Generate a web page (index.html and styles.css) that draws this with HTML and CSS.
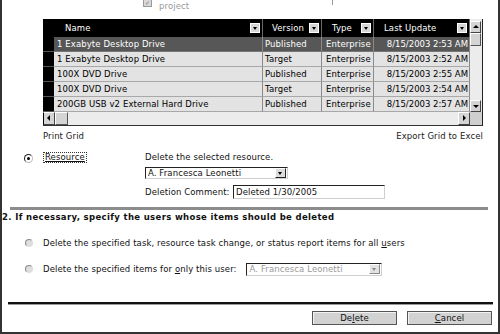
FILE: index.html
```html
<!doctype html>
<html lang="en">
<head>
    <meta charset="UTF-8">
    <title>Delete Resource</title>
    <link rel="stylesheet" href="styles.css">
</head>
<body>
<div class="frame">
    <div class="top-note">
        <span class="check">&#10003;</span>
        <span class="note-text">project</span>
        <span class="tick"></span>
    </div>

    <div class="grid">
        <div class="grid-main">
            <div class="grid-table">
                <div class="hd sel"></div>
                <div class="hd pad-name"><span>Name</span><span class="drop"></span></div>
                <div class="hd pad-ver"><span>Version</span><span class="drop"></span></div>
                <div class="hd pad-type"><span>Type</span><span class="drop"></span></div>
                <div class="hd pad-last"><span>Last Update</span><span class="drop"></span></div>

                <div class="cell sel"></div>
                <div class="cell current name">1 Exabyte Desktop Drive</div>
                <div class="cell current ver">Published</div>
                <div class="cell current type">Enterprise</div>
                <div class="cell current date">8/15/2003 2:53 AM</div>

                <div class="cell sel"></div>
                <div class="cell name">1 Exabyte Desktop Drive</div>
                <div class="cell ver">Target</div>
                <div class="cell type">Enterprise</div>
                <div class="cell date">8/15/2003 2:52 AM</div>

                <div class="cell sel"></div>
                <div class="cell name">100X DVD Drive</div>
                <div class="cell ver">Published</div>
                <div class="cell type">Enterprise</div>
                <div class="cell date">8/15/2003 2:55 AM</div>

                <div class="cell sel"></div>
                <div class="cell name">100X DVD Drive</div>
                <div class="cell ver">Target</div>
                <div class="cell type">Enterprise</div>
                <div class="cell date">8/15/2003 2:54 AM</div>

                <div class="cell sel"></div>
                <div class="cell name">200GB USB v2 External Hard Drive</div>
                <div class="cell ver">Published</div>
                <div class="cell type">Enterprise</div>
                <div class="cell date">8/15/2003 2:57 AM</div>
            </div>
            <div class="vscroll">
                <span class="sbtn up"></span>
                <span class="thumb"></span>
                <span class="track"></span>
                <span class="sbtn down"></span>
            </div>
        </div>
        <div class="hscroll">
            <span class="sbtn left"></span>
            <span class="thumb"></span>
            <span class="track"></span>
            <span class="sbtn right"></span>
            <span class="corner"></span>
        </div>
    </div>

    <div class="grid-links">
        <span>Print Grid</span>
        <span>Export Grid to Excel</span>
    </div>

    <div class="resource-row">
        <span class="radio checked"></span>
        <div class="label-col"><span class="focus-label">Resource</span></div>
        <div class="fields">
            <div class="line">Delete the selected resource.</div>
            <div class="select wide">
                <span class="select-text">A. Francesca Leonetti</span>
                <span class="select-btn"></span>
            </div>
            <div class="comment">
                <span class="comment-label">Deletion Comment:</span>
                <span class="input">Deleted 1/30/2005</span>
            </div>
        </div>
    </div>

    <div class="divider"></div>

    <div class="section-title">2. If necessary, specify the users whose items should be deleted</div>

    <div class="option first">
        <span class="radio"></span>
        <span class="option-text">Delete the specified task, resource task change, or status report items for all <u>u</u>sers</span>
    </div>
    <div class="option">
        <span class="radio"></span>
        <span class="option-text">Delete the specified items for <u>o</u>nly this user:</span>
        <div class="select narrow disabled">
            <span class="select-text">A. Francesca Leonetti</span>
            <span class="select-btn"></span>
        </div>
    </div>

    <div class="bottom-line"></div>

    <div class="buttons">
        <button type="button">De<u>l</u>ete</button>
        <button type="button"><u>C</u>ancel</button>
    </div>
</div>
</body>
</html>
```

FILE: styles.css
```css
body {
    margin: 0;
    padding: 0;
    background: #ffffff;
    font-family: 'DejaVu Sans', Verdana, sans-serif;
    font-size: 8.5px;
    letter-spacing: 0.1px;
    color: #111111;
}
.frame {
    width: 500px;
    height: 334px;
    box-sizing: border-box;
    border-left: 2px solid #333333;
    border-right: 2px solid #333333;
    border-bottom: 2px solid #333333;
    overflow: hidden;
}
.top-note {
    height: 19px;
    display: flex;
    align-items: flex-start;
    padding-left: 141px;
}
.check {
    width: 7px;
    height: 6px;
    background: #d8d8d8;
    border: 1px solid #9a9a9a;
    border-top: none;
    font-size: 6px;
    line-height: 5px;
    color: #777777;
    text-align: center;
    overflow: hidden;
}
.note-text {
    margin-left: 7px;
    line-height: 12px;
    color: #9a9a9a;
}
.tick {
    width: 1px;
    height: 5px;
    background: #999999;
    margin-left: 143px;
}

/* grid */
.grid {
    margin-left: 41px;
    width: 440px;
    border-bottom: 1px solid #333333;
    border-right: 1px solid #222222;
    box-sizing: border-box;
}
.grid-main {
    display: flex;
}
.grid-table {
    display: grid;
    grid-template-columns: 11px 209px 59px 52px 96px;
    grid-template-rows: 18px repeat(5, 15px);
}
.hd {
    background: #000000;
    color: #ffffff;
    display: flex;
    align-items: center;
    justify-content: space-between;
    border-right: 1px solid #6a6a6a;
    padding-right: 2px;
    white-space: nowrap;
}
.hd.sel {
    border-right: none;
}
.pad-name { padding-left: 11px; }
.pad-ver { padding-left: 9px; }
.pad-type { padding-left: 10px; }
.pad-last { padding-left: 10px; }
.drop {
    width: 10px;
    height: 10px;
    background: #d6d6d6;
    border: 1px solid #ffffff;
    box-sizing: border-box;
    position: relative;
}
.drop::after {
    content: "";
    position: absolute;
    left: 2px;
    top: 3px;
    border-left: 2.5px solid transparent;
    border-right: 2.5px solid transparent;
    border-top: 3px solid #000000;
}
.cell {
    background: #e3e3e3;
    color: #000000;
    border-right: 1px solid #8a8a8a;
    border-bottom: 1px solid #a8a8a8;
    line-height: 14px;
    white-space: nowrap;
    overflow: hidden;
    padding-left: 3px;
}
.cell.sel {
    background: #000000;
    border-right: none;
    border-bottom: 1px solid #555555;
    padding: 0;
}
.cell.current {
    background: #575757;
    color: #ffffff;
    border-bottom-color: #777777;
}
.cell.ver { padding-left: 2px; }
.cell.type { padding-left: 4px; }
.cell.date {
    text-align: right;
    padding-left: 0;
    padding-right: 1px;
    letter-spacing: 0;
}
.vscroll {
    width: 12px;
    display: flex;
    flex-direction: column;
    background: #ececec;
    padding-top: 2px;
    box-sizing: border-box;
}
.sbtn {
    width: 11px;
    height: 12px;
    background: #d4d4d4;
    border: 1px solid #ffffff;
    border-right-color: #444444;
    border-bottom-color: #444444;
    box-sizing: border-box;
    position: relative;
    flex-shrink: 0;
}
.sbtn::after {
    content: "";
    position: absolute;
    left: 2px;
    top: 3px;
}
.sbtn.up::after {
    border-left: 3px solid transparent;
    border-right: 3px solid transparent;
    border-bottom: 3px solid #000000;
}
.sbtn.down::after {
    top: 4px;
    border-left: 3px solid transparent;
    border-right: 3px solid transparent;
    border-top: 3px solid #000000;
}
.sbtn.left::after {
    left: 3px;
    top: 2px;
    border-top: 3px solid transparent;
    border-bottom: 3px solid transparent;
    border-right: 3px solid #000000;
}
.sbtn.right::after {
    left: 4px;
    top: 2px;
    border-top: 3px solid transparent;
    border-bottom: 3px solid transparent;
    border-left: 3px solid #000000;
}
.vscroll .thumb {
    height: 13px;
    width: 11px;
    background: #d4d4d4;
    border: 1px solid #ffffff;
    border-right-color: #555555;
    border-bottom-color: #555555;
    box-sizing: border-box;
}
.vscroll .track {
    flex: 1;
}
.hscroll {
    height: 13px;
    display: flex;
    background: #ececec;
    align-items: stretch;
}
.hscroll .sbtn {
    width: 12px;
    height: 13px;
}
.hscroll .sbtn.left {
    border-left: 1px solid #000000;
}
.hscroll .thumb {
    width: 13px;
    background: #d4d4d4;
    border: 1px solid #ffffff;
    border-right-color: #555555;
    border-bottom-color: #555555;
    box-sizing: border-box;
}
.hscroll .track {
    flex: 1;
}
.hscroll .corner {
    width: 12px;
    background: #cfcfcf;
}

.grid-links {
    margin: 4px 0 0 41px;
    width: 440px;
    display: flex;
    justify-content: space-between;
    line-height: 12px;
    color: #222222;
}

/* resource */
.resource-row {
    display: flex;
    margin-top: 9px;
    align-items: flex-start;
}
.radio {
    width: 9px;
    height: 9px;
    border-radius: 50%;
    box-sizing: border-box;
    border: 1px solid #7a7a7a;
    border-bottom-color: #dcdcdc;
    border-right-color: #dcdcdc;
    background: #e8e8e8;
    margin-left: 22px;
    flex-shrink: 0;
    position: relative;
}
.radio.checked {
    margin-top: 3px;
    border-color: #222222;
    border-bottom-color: #bbbbbb;
    border-right-color: #bbbbbb;
    background: #ffffff;
}
.radio.checked::after {
    content: "";
    position: absolute;
    left: 2px;
    top: 2px;
    width: 3px;
    height: 3px;
    border-radius: 50%;
    background: #000000;
}
.label-col {
    width: 102px;
    margin-left: 10px;
    padding-top: 1px;
}
.focus-label {
    display: inline-block;
    border: 1px dotted #333333;
    padding: 0 1px;
    line-height: 9px;
    text-decoration: underline;
}
.fields {
    display: flex;
    flex-direction: column;
    align-items: flex-start;
}
.line {
    line-height: 12px;
}
.select {
    height: 12px;
    display: flex;
    align-items: center;
    justify-content: space-between;
    background: #ffffff;
    border: 1px solid #222222;
    border-right-color: #cfcfcf;
    border-bottom-color: #cfcfcf;
    box-sizing: border-box;
}
.select.wide {
    width: 143px;
    margin-top: 4px;
}
.select-text {
    padding-left: 2px;
    white-space: nowrap;
    line-height: 10px;
}
.select-btn {
    width: 11px;
    height: 10px;
    background: #dcdcdc;
    border: 1px solid #ffffff;
    border-right-color: #222222;
    border-bottom-color: #222222;
    box-sizing: border-box;
    position: relative;
    margin-right: 1px;
}
.select-btn::after {
    content: "";
    position: absolute;
    left: 2px;
    top: 3px;
    border-left: 2.5px solid transparent;
    border-right: 2.5px solid transparent;
    border-top: 3px solid #000000;
}
.comment {
    display: flex;
    align-items: center;
    margin-top: 6px;
    height: 14px;
}
.comment-label {
    width: 88px;
}
.input {
    width: 152px;
    height: 14px;
    box-sizing: border-box;
    border: 1px solid #222222;
    border-right-color: #cfcfcf;
    border-bottom-color: #cfcfcf;
    padding-left: 2px;
    line-height: 12px;
}

.divider {
    margin: 8px 0 0 8px;
    width: 478px;
    height: 3px;
    background: #8c8c8c;
}
.section-title {
    font-weight: bold;
    font-size: 8.5px;
    letter-spacing: 0.35px;
    line-height: 12px;
    margin-top: 1px;
    color: #111111;
    white-space: nowrap;
}
.option {
    display: flex;
    align-items: center;
    height: 12px;
    margin-top: 14px;
}
.option .radio {
    width: 8px;
    height: 8px;
    margin-left: 23px;
    border-color: #8a8a8a;
    border-bottom-color: #dddddd;
    border-right-color: #dddddd;
    background: #dedede;
}
.option-text {
    margin-left: 10px;
    white-space: nowrap;
}
.select.narrow {
    width: 136px;
    height: 13px;
    margin-left: 9px;
}
.select.disabled .select-text {
    color: #9a9a9a;
    padding-left: 3px;
}
.select.disabled .select-btn {
    background: #e2e2e2;
    border-right-color: #888888;
    border-bottom-color: #888888;
}
.select.disabled .select-btn::after {
    border-top-color: #888888;
}

.bottom-line {
    margin: 27px 0 0 6px;
    width: 485px;
    height: 2px;
    background: #111111;
    border-bottom: 1px solid #9a9a9a;
}
.buttons {
    display: flex;
    justify-content: flex-end;
    gap: 10px;
    margin-top: 6px;
    padding-right: 6px;
}
button {
    width: 85px;
    height: 14px;
    padding: 0;
    font-family: 'DejaVu Sans', Verdana, sans-serif;
    font-size: 8.5px;
    letter-spacing: 0.1px;
    color: #111111;
    background: #d2d2d2;
    border: 1px solid #555555;
    box-shadow: inset 1px 1px 0 #f2f2f2;
    line-height: 12px;
}
```
